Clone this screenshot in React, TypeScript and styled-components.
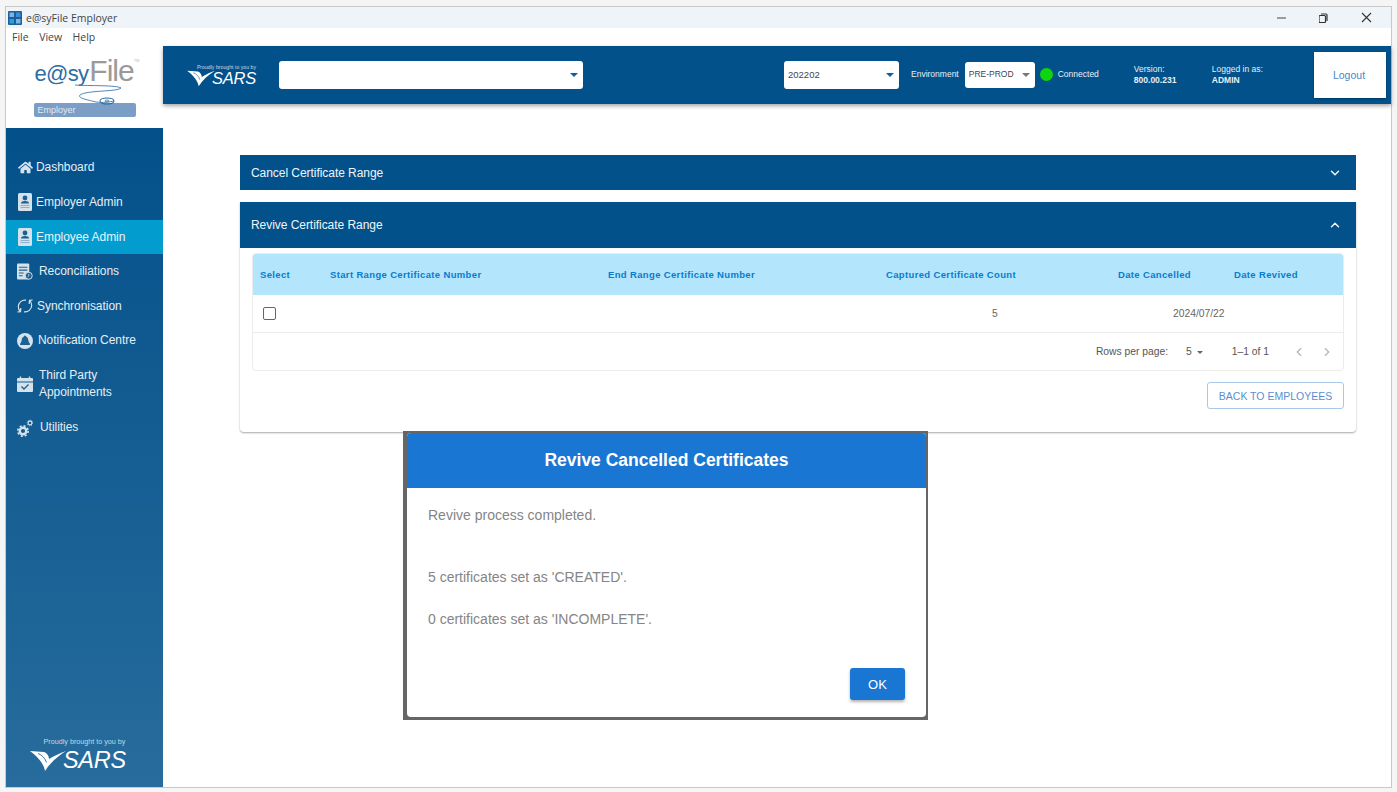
import React from "react";
import styled, { createGlobalStyle } from "styled-components";
import { FaHome } from "react-icons/fa";
import { ChevronDown, ChevronUp, ChevronLeft, ChevronRight } from "lucide-react";

const Global = createGlobalStyle`
  html, body { margin: 0; padding: 0; background: #f5f5f5; overflow: hidden; }
  * { box-sizing: border-box; }
  body { font-family: "Liberation Sans", Arial, sans-serif; }
`;

const Screen = styled.div`
  position: relative;
  width: 1397px;
  height: 792px;
  padding: 6px 5px 4px 5px;
`;
const Win = styled.div`
  width: 1387px;
  height: 782px;
  border: 1px solid #c9c9c9;
  background: #fff;
  display: flex;
  flex-direction: column;
`;
const TitleBar = styled.div`
  height: 21px;
  background: #eff4f9;
  display: flex;
  align-items: center;
  padding: 0 4px 0 2px;
`;
const TitleText = styled.span`
  flex: 1;
  margin-left: 4px;
  font-family: "Open Sans", sans-serif;
  font-size: 10.5px;
  color: #444;
`;
const WinBtn = styled.button`
  width: 42px;
  height: 21px;
  background: none;
  border: 0;
  padding: 0;
  display: flex;
  align-items: center;
  justify-content: center;
`;
const MenuBar = styled.div`
  height: 18px;
  display: flex;
  align-items: center;
  padding-left: 6px;
  gap: 10.5px;
  font-family: "Open Sans", sans-serif;
  font-size: 10.5px;
  color: #444;
`;
const Body = styled.div`
  flex: 1;
  display: flex;
  min-height: 0;
`;
const Left = styled.div`
  width: 157px;
  flex: none;
  display: flex;
  flex-direction: column;
`;
const LogoBox = styled.div`
  height: 82px;
  display: flex;
  flex-direction: column;
  align-items: center;
  padding-top: 11px;
`;
const LogoLine = styled.div`
  height: 27px;
  display: flex;
  align-items: baseline;
  line-height: 27px;
  margin-left: 5px;
`;
const LogoEasy = styled.span`
  font-size: 22px;
  letter-spacing: -0.7px;
  color: #2e6da4;
`;
const LogoFile = styled.span`
  font-size: 30px;
  color: #9a9a9a;
  letter-spacing: -1px;
  margin-left: 1px;
`;
const LogoTm = styled.sup`
  font-size: 4px;
  color: #bbb;
  align-self: flex-start;
  line-height: 8px;
  margin: 0;
`;
const Swoosh = styled.svg`
  width: 50px;
  height: 23px;
  margin: 0 0 -4px 27px;
  position: relative;
  z-index: 1;
  flex: none;
`;
const Badge = styled.div`
  width: 102px;
  height: 14px;
  background: #7b9dc6;
  border-radius: 2px;
  color: #e4ebf3;
  font-size: 9px;
  line-height: 15px;
  padding-left: 4px;
`;
const Side = styled.nav`
  flex: 1;
  background: linear-gradient(180deg, #03508a 0%, #276c9c 100%);
  display: flex;
  flex-direction: column;
  padding-top: 22.6px;
  color: #e6eef5;
`;
const NavItem = styled.div<{ $active?: boolean; $tall?: boolean; $gap: number }>`
  height: ${(p) => (p.$tall ? 52.3 : 34.6)}px;
  display: flex;
  align-items: center;
  padding-left: 11px;
  gap: ${(p) => p.$gap}px;
  font-size: 12px;
  line-height: 17px;
  letter-spacing: -0.05px;
  background: ${(p) => (p.$active ? "#029ccf" : "transparent")};
  color: ${(p) => (p.$active ? "#e8f5fb" : "#e6eef5")};
`;
const IconSlot = styled.span`
  width: 16px;
  height: 18px;
  display: flex;
  align-items: center;
  justify-content: center;
  flex: none;
  color: #d5e2ec;
`;
const NavLabel = styled.span`
  white-space: pre-line;
`;
const SideFoot = styled.div`
  margin-top: auto;
  height: 50px;
  display: flex;
  flex-direction: column;
  align-items: center;
`;
const Proud = styled.div<{ $small?: boolean }>`
  font-size: ${(p) => (p.$small ? 5.2 : 7.2)}px;
  line-height: ${(p) => (p.$small ? 6 : 9)}px;
  color: ${(p) => (p.$small ? "#c9d8e6" : "#c7d6e3")};
  white-space: nowrap;
`;
const SarsRow = styled.div<{ $mt: number; $ml: number }>`
  display: flex;
  align-items: center;
  color: #fff;
  margin-top: ${(p) => p.$mt}px;
  align-self: flex-start;
  margin-left: ${(p) => p.$ml}px;
`;
const SarsText = styled.span<{ $size: number; $ls: number }>`
  font-style: italic;
  font-size: ${(p) => p.$size}px;
  line-height: 1;
  letter-spacing: ${(p) => p.$ls}px;
  margin-left: -3px;
`;
const Right = styled.div`
  flex: 1;
  min-width: 0;
  display: flex;
  flex-direction: column;
`;
const Header = styled.header`
  height: 58px;
  flex: none;
  background: #02518b;
  box-shadow: 0 2px 4px rgba(0, 0, 0, 0.35);
  display: flex;
  align-items: center;
  padding: 0 5px 0 24px;
  color: #e8eff5;
  position: relative;
  z-index: 1;
`;
const HeadLogo = styled.div`
  width: 69px;
  display: flex;
  flex-direction: column;
  align-items: flex-end;
  margin-right: 23px;
`;
const Select = styled.div<{ $w: number; $h: number; $mr: number; $fs: number }>`
  width: ${(p) => p.$w}px;
  height: ${(p) => p.$h}px;
  margin-right: ${(p) => p.$mr}px;
  background: #fff;
  border-radius: 3px;
  display: flex;
  align-items: center;
  justify-content: space-between;
  padding: 0 5px 2px 4px;
  font-size: ${(p) => p.$fs}px;
  color: #444;
  flex: none;
`;
const Caret = styled.span<{ $color: string; $size: number }>`
  width: 0;
  height: 0;
  margin-top: 2px;
  border-left: ${(p) => p.$size}px solid transparent;
  border-right: ${(p) => p.$size}px solid transparent;
  border-top: ${(p) => p.$size}px solid ${(p) => p.$color};
`;
const HeadLabel = styled.span<{ $mr: number }>`
  font-size: 8.5px;
  margin-right: ${(p) => p.$mr}px;
  padding-bottom: 3px;
  white-space: nowrap;
  flex: none;
`;
const Dot = styled.span`
  width: 13px;
  height: 13px;
  border-radius: 50%;
  background: #0fd40f;
  margin: 0 5px 2px 0;
  flex: none;
`;
const Info = styled.div<{ $w: number }>`
  width: ${(p) => p.$w}px;
  font-size: 8.5px;
  line-height: 10.5px;
  padding-bottom: 1px;
  flex: none;
`;
const InfoValue = styled.div`
  font-weight: 700;
`;
const Logout = styled.button`
  width: 72px;
  height: 46px;
  background: #fff;
  border: 0;
  margin-left: auto;
  padding: 0 2px 0 0;
  color: #4a86c5;
  font: 10.5px "Liberation Sans", sans-serif;
  box-shadow: 0 1px 2px rgba(0, 0, 0, 0.3);
`;
const Main = styled.main`
  flex: 1;
  padding: 51px 35px 0 77px;
  display: flex;
  flex-direction: column;
  gap: 12px;
`;
const AccHead = styled.div<{ $h: number }>`
  height: ${(p) => p.$h}px;
  background: #02518b;
  color: #f0f5f9;
  font-size: 12px;
  letter-spacing: -0.05px;
  display: flex;
  align-items: center;
  justify-content: space-between;
  padding: 0 14px 0 11px;
`;
const Panel = styled.section`
  background: #fff;
  border-radius: 0 0 4px 4px;
  box-shadow: 0 1px 2px rgba(0, 0, 0, 0.35);
  height: 230px;
`;
const PanelBody = styled.div`
  padding: 5px 12px 0;
  display: flex;
  flex-direction: column;
`;
const TableWrap = styled.div`
  border: 1px solid #ececec;
  border-radius: 4px;
  overflow: hidden;
`;
const gridCols = "70px 278px 278px 232px 116px 1fr";
const THead = styled.div`
  height: 41px;
  background: #b3e5fc;
  display: grid;
  grid-template-columns: ${gridCols};
  align-items: center;
  padding: 0 0 1px 7px;
  color: #0a7ccc;
  font-size: 9.5px;
  font-weight: 700;
  letter-spacing: 0.35px;
`;
const TRow = styled.div`
  height: 38px;
  display: grid;
  grid-template-columns: ${gridCols};
  align-items: center;
  padding-left: 7px;
  font-size: 10.3px;
  color: #666;
  border-bottom: 1px solid #ececec;
`;
const Check = styled.span`
  width: 13px;
  height: 13px;
  border: 1.5px solid #666;
  border-radius: 2px;
  margin-left: 3px;
`;
const Cell = styled.span<{ $offset: number }>`
  padding-left: ${(p) => p.$offset}px;
  white-space: nowrap;
`;
const Pager = styled.div`
  height: 37px;
  display: flex;
  align-items: center;
  justify-content: flex-end;
  padding-right: 9px;
  font-size: 10.3px;
  color: #555;
`;
const PerPage = styled.span`
  display: flex;
  align-items: center;
  gap: 5px;
  margin: 0 29px 0 18px;
`;
const PageBtns = styled.span`
  display: flex;
  gap: 14px;
  margin-left: 23px;
  color: #b3b3b3;
`;
const Actions = styled.div`
  display: flex;
  justify-content: flex-end;
  margin-top: 11px;
`;
const BackBtn = styled.button`
  width: 137px;
  height: 27px;
  background: #fff;
  border: 1px solid #a9c9ec;
  border-radius: 3px;
  padding: 0;
  color: #5b8ed0;
  font: 10.5px "Liberation Sans", sans-serif;
`;
const Dialog = styled.div`
  position: absolute;
  left: 403px;
  top: 431px;
  width: 525px;
  height: 289px;
  background: #666;
  padding: 2px 2px 3px 4px;
  z-index: 5;
`;
const DialogPaper = styled.div`
  height: 100%;
  background: #fff;
  border-radius: 4px;
  overflow: hidden;
  display: flex;
  flex-direction: column;
`;
const DialogHead = styled.div`
  height: 55px;
  flex: none;
  background: #1976d2;
  color: #fff;
  font-size: 17.5px;
  font-weight: 700;
  display: flex;
  align-items: center;
  justify-content: center;
`;
const DialogBody = styled.div`
  flex: 1;
  padding: 19px 21px 17px;
  display: flex;
  flex-direction: column;
  color: #858585;
  font-size: 14px;
  line-height: 16px;
`;
const DialogLine = styled.p<{ $mt: number }>`
  margin: ${(p) => p.$mt}px 0 0;
`;
const DialogActions = styled.div`
  margin-top: auto;
  display: flex;
  justify-content: flex-end;
`;
const OkBtn = styled.button`
  width: 55px;
  height: 32px;
  background: #1976d2;
  border: 0;
  border-radius: 3px;
  color: #fff;
  font: 13px "Liberation Sans", sans-serif;
  box-shadow: 0 2px 3px rgba(0, 0, 0, 0.3);
`;

const SarsMark = ({ w, h }: { w: number; h: number }) => (
  <svg width={w} height={h} viewBox="0 0 36 22">
    <path d="M0 1L14 2C17 3 19 6 19 9C24 6 30 3 36 1C28 6 20 13 15 21C14 14 8 7 0 1Z" fill="#fff" />
    <path d="M8 3.500C12 5 15 8 16.500 12.500" stroke="#2a6a9a" strokeWidth=".9" fill="none" />
  </svg>
);

const IdIcon = () => (
  <svg width="14" height="18" viewBox="0 0 14 18">
    <rect x="0" y="0" width="14" height="18" rx="1.500" fill="currentColor" />
    <circle cx="7" cy="5" r="2.400" fill="#1f5f8f" />
    <path d="M3 10.500c0-2 1.800-2.600 4-2.600s4 .6 4 2.600z" fill="#1f5f8f" />
    <path d="M2.500 12.500h9M2.500 14.500h9" stroke="#8fb0c9" strokeWidth="1" />
  </svg>
);
const ReconIcon = () => (
  <svg width="17" height="18" viewBox="0 0 17 18">
    <rect x="0" y="0" width="13" height="17" rx="1" fill="currentColor" />
    <path d="M2 4h9M2 7h9M2 10h5M2 13h4" stroke="#23608f" strokeWidth="1.100" />
    <circle cx="12.500" cy="13" r="3.700" fill="#23608f" stroke="currentColor" strokeWidth="1" />
    <path d="M12.500 11v2.200l-1.300 1" stroke="currentColor" strokeWidth=".8" fill="none" />
  </svg>
);
const SyncIcon = () => (
  <svg width="16" height="16" viewBox="0 0 16 16" fill="none" stroke="currentColor" strokeWidth="1.200">
    <path d="M9 2.200C5 1.500 1.500 4.500 1.300 8.500c-.1 2 .7 3.800 2.200 5" />
    <path d="M3.800 10l-.3 3.700-3.100.3" />
    <path d="M7 13.800c4 .7 7.500-2.300 7.700-6.300.1-2-.7-3.800-2.200-5" />
    <path d="M12.200 6l.3-3.700 3.100-.3" />
  </svg>
);
const BellIcon = () => (
  <svg width="16" height="16" viewBox="0 0 16 16">
    <circle cx="8" cy="8" r="8" fill="currentColor" />
    <path d="M8 2.500c-.5 0-1 .4-1.100 1C5.300 4.200 4.800 5.800 4.600 7.500c-.2 1.300-.7 2.200-1.500 3.200V12h9.800v-1.300c-.8-1-1.300-1.900-1.500-3.200-.2-1.700-.7-3.300-2.300-4-.1-.6-.6-1-1.100-1z" fill="#21618f" />
  </svg>
);
const CalIcon = () => (
  <svg width="16" height="16" viewBox="0 0 16 16">
    <path d="M0 3a1 1 0 0 1 1-1h14a1 1 0 0 1 1 1v2.500H0z" fill="currentColor" />
    <path d="M3.500 .5v3M12.500 .5v3" stroke="currentColor" strokeWidth="1.400" />
    <path d="M0 6.500h16V15a1 1 0 0 1-1 1H1a1 1 0 0 1-1-1z" fill="currentColor" />
    <path d="M4.500 10.500l2.500 2.500 4.500-4.500" stroke="#21618f" strokeWidth="1.400" fill="none" />
  </svg>
);
const GearsIcon = () => (
  <svg width="16" height="18" viewBox="0 0 16 18" fill="none" stroke="currentColor">
    <circle cx="6" cy="12" r="3.300" strokeWidth="2.400" />
    <circle cx="6" cy="12" r="5.200" strokeWidth="1.600" strokeDasharray="2.040 2.040" />
    <circle cx="13" cy="4" r="1.900" strokeWidth="1.100" />
    <circle cx="13" cy="4" r="2.800" strokeWidth=".9" strokeDasharray="1.100 1.100" />
  </svg>
);
const AppIcon = () => (
  <svg width="14" height="14" viewBox="0 0 14 14">
    <rect width="14" height="14" rx="1" fill="#1d5f9e" />
    <rect x="1.500" y="1.500" width="4.500" height="4.500" fill="#7fb3e0" />
    <rect x="8" y="1.500" width="4.500" height="4.500" fill="#3d8fd6" />
    <rect x="1.500" y="8" width="4.500" height="4.500" fill="#2f9fd0" />
    <rect x="8" y="8" width="4.500" height="4.500" fill="#7fb3e0" />
  </svg>
);

const navItems = [
  { label: "Dashboard", icon: <FaHome size={15} />, gap: 3 },
  { label: "Employer Admin", icon: <IdIcon />, gap: 3 },
  { label: "Employee Admin", icon: <IdIcon />, gap: 3, active: true },
  { label: "Reconciliations", icon: <ReconIcon />, gap: 6 },
  { label: "Synchronisation", icon: <SyncIcon />, gap: 4 },
  { label: "Notification Centre", icon: <BellIcon />, gap: 5 },
  { label: "Third Party\nAppointments", icon: <CalIcon />, gap: 6, tall: true },
  { label: "Utilities", icon: <GearsIcon />, gap: 7 },
];

const cols = [
  "Select",
  "Start Range Certificate Number",
  "End Range Certificate Number",
  "Captured Certificate Count",
  "Date Cancelled",
  "Date Revived",
];

export default function App() {
  return (
    <Screen>
      <Global />
      <Win>
        <TitleBar>
          <AppIcon />
          <TitleText>e@syFile Employer</TitleText>
          <WinBtn aria-label="Minimise">
            <svg width="10" height="10" viewBox="0 0 10 10"><path d="M0 5h9" stroke="#444" /></svg>
          </WinBtn>
          <WinBtn aria-label="Restore">
            <svg width="10" height="10" viewBox="1 0 10 10" fill="none" stroke="#333" strokeWidth="1.200"><rect x="1" y="2.500" width="6.500" height="7" rx="1" /><path d="M3 1h5a1 1 0 0 1 1 1v6" /></svg>
          </WinBtn>
          <WinBtn aria-label="Close">
            <svg width="11" height="11" viewBox="0 0 11 11"><path d="M1 1l9 9M10 1l-9 9" stroke="#333" strokeWidth="1.100" /></svg>
          </WinBtn>
        </TitleBar>
        <MenuBar>
          <span>File</span>
          <span>View</span>
          <span>Help</span>
        </MenuBar>
        <Body>
          <Left>
            <LogoBox>
              <LogoLine>
                <LogoEasy>e@sy</LogoEasy>
                <LogoFile>File</LogoFile>
                <LogoTm>TM</LogoTm>
              </LogoLine>
              <Swoosh viewBox="0 0 50 23" fill="none">
                <path d="M2 1C16 2 44 1 48 4 44 8 14 6 7 11c-3 3 8 5 16 7 6 1 14 0 18-1" stroke="#3d78ae" strokeWidth=".9" />
                <ellipse cx="34" cy="17" rx="7" ry="3" stroke="#2e6da4" strokeWidth="1.100" />
                <ellipse cx="34" cy="17" rx="2" ry="1" stroke="#2e6da4" strokeWidth=".8" />
              </Swoosh>
              <Badge>Employer</Badge>
            </LogoBox>
            <Side>
              {navItems.map((n) => (
                <NavItem key={n.label} $active={n.active} $tall={n.tall} $gap={n.gap}>
                  <IconSlot>{n.icon}</IconSlot>
                  <NavLabel>{n.label}</NavLabel>
                </NavItem>
              ))}
              <SideFoot>
                <Proud>Proudly brought to you by</Proud>
                <SarsRow $mt={3} $ml={24}>
                  <SarsMark w={36} h={22} />
                  <SarsText $size={23.5} $ls={-0.3}>SARS</SarsText>
                </SarsRow>
              </SideFoot>
            </Side>
          </Left>
          <Right>
            <Header>
              <HeadLogo>
                <Proud $small>Proudly brought to you by</Proud>
                <SarsRow $mt={0} $ml={0}>
                  <SarsMark w={28} h={17} />
                  <SarsText $size={16.5} $ls={-0.2}>SARS</SarsText>
                </SarsRow>
              </HeadLogo>
              <Select $w={304} $h={28} $mr={201} $fs={9.5}>
                <span />
                <Caret $color="#0b5fa5" $size={4} />
              </Select>
              <Select $w={115} $h={28} $mr={12} $fs={9.5}>
                <span>202202</span>
                <Caret $color="#0b5fa5" $size={4} />
              </Select>
              <HeadLabel $mr={6}>Environment</HeadLabel>
              <Select $w={70} $h={26} $mr={5} $fs={8.5}>
                <span>PRE-PROD</span>
                <Caret $color="#777" $size={4} />
              </Select>
              <Dot />
              <HeadLabel $mr={35}>Connected</HeadLabel>
              <Info $w={78}>
                <div>Version:</div>
                <InfoValue>800.00.231</InfoValue>
              </Info>
              <Info $w={80}>
                <div>Logged in as:</div>
                <InfoValue>ADMIN</InfoValue>
              </Info>
              <Logout>Logout</Logout>
            </Header>
            <Main>
              <AccHead $h={35}>
                Cancel Certificate Range
                <ChevronDown size={14} strokeWidth={2.500} />
              </AccHead>
              <Panel>
                <AccHead $h={46}>
                  Revive Certificate Range
                  <ChevronUp size={14} strokeWidth={2.500} />
                </AccHead>
                <PanelBody>
                  <TableWrap>
                    <THead>
                      {cols.map((c) => (
                        <span key={c}>{c}</span>
                      ))}
                    </THead>
                    <TRow>
                      <Check />
                      <span />
                      <span />
                      <Cell $offset={106}>5</Cell>
                      <Cell $offset={55}>2024/07/22</Cell>
                      <span />
                    </TRow>
                    <Pager>
                      Rows per page:
                      <PerPage>
                        5 <Caret $color="#666" $size={3.5} />
                      </PerPage>
                      1–1 of 1
                      <PageBtns>
                        <ChevronLeft size={14} />
                        <ChevronRight size={14} />
                      </PageBtns>
                    </Pager>
                  </TableWrap>
                  <Actions>
                    <BackBtn>BACK TO EMPLOYEES</BackBtn>
                  </Actions>
                </PanelBody>
              </Panel>
            </Main>
          </Right>
        </Body>
      </Win>
      <Dialog>
        <DialogPaper>
          <DialogHead>Revive Cancelled Certificates</DialogHead>
          <DialogBody>
            <DialogLine $mt={0}>Revive process completed.</DialogLine>
            <DialogLine $mt={46}>5 certificates set as 'CREATED'.</DialogLine>
            <DialogLine $mt={26}>0 certificates set as 'INCOMPLETE'.</DialogLine>
            <DialogActions>
              <OkBtn>OK</OkBtn>
            </DialogActions>
          </DialogBody>
        </DialogPaper>
      </Dialog>
    </Screen>
  );
}
